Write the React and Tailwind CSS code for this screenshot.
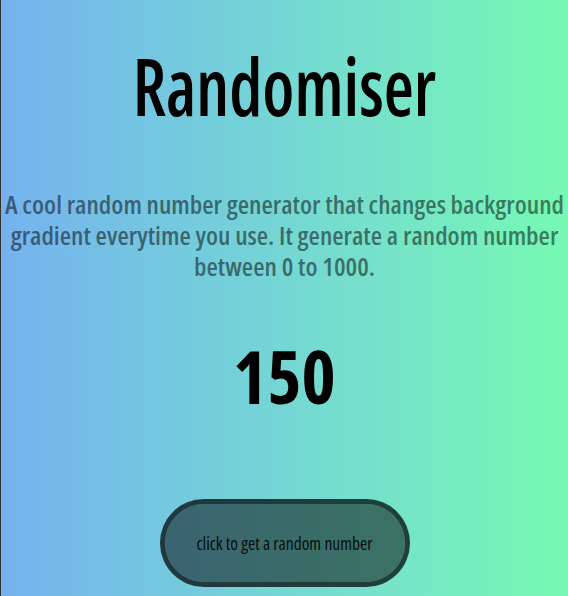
export default function App() {
  return (
    <div className="min-h-[596px] w-full border-l border-[#333333] bg-gradient-to-r from-[#75b2ee] to-[#76f9b2] flex flex-col items-center text-center font-['Open_Sans',sans-serif] [font-stretch:condensed]">
      <h1 className="mt-[38px] text-[79px] leading-[96px] font-semibold text-black scale-x-[0.875]">Randomiser</h1>
      <p className="mt-[55px] text-[26px] leading-[31px] font-semibold text-black/50">
        A cool random number generator that changes background gradient everytime you use. It generate a random number between 0 to 1000.
      </p>
      <div className="mt-[54px] text-[73px] leading-[80px] font-bold text-black [font-stretch:semi-condensed]">150</div>
      <button className="mt-[83px] w-[250px] h-[88px] rounded-full border-[5px] border-black/[0.72] bg-black/50 bg-clip-padding text-[17.5px] text-black/90 font-['Open_Sans',sans-serif] [font-stretch:condensed]">
        click to get a random number
      </button>
    </div>
  );
}
